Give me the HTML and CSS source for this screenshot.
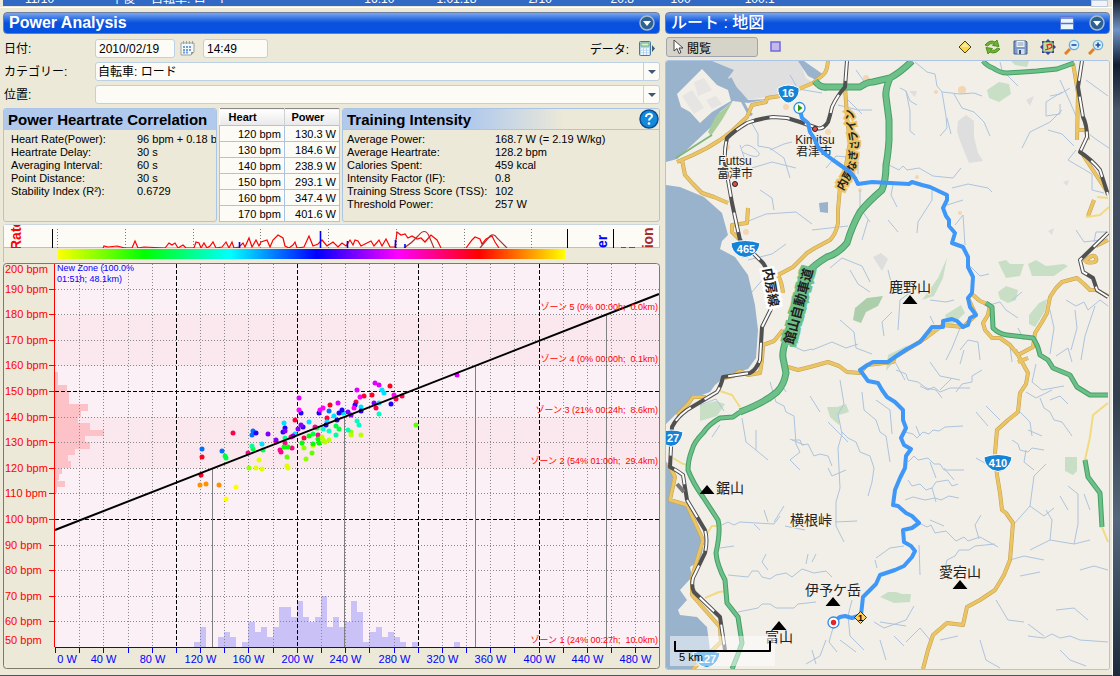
FILE: index.html
```html
<!DOCTYPE html>
<html lang="ja">
<head>
    <meta charset="utf-8">
    <title>Power Analysis</title>
    <meta name="viewport" content="width=device-width, initial-scale=1">
    <link rel="stylesheet" href="styles.css">
</head>
<body>
<div class="window">
    <div class="listrow">
        <div class="cells">
            <span>11/10</span><span>午後</span><span>自転車: ロード</span><span>16:10</span><span>1:01:18</span><span>2/10</span><span>20.8</span><span>100</span><span>100.1</span>
        </div>
        <div class="scroll"></div>
    </div>

    <div class="panes">
        <section class="pane">
            <header class="titlebar">
                <h1>Power Analysis</h1>
                <button class="round" aria-label="menu">
                    <svg width="16" height="16"><circle cx="8" cy="8" r="7" fill="#2e6090" stroke="#a9bccb" stroke-width="1.5"/><path d="M4 6h8l-4 5z" fill="#fff"/></svg>
                </button>
            </header>

            <form class="fields">
                <label for="date">日付:</label>
                <div class="line">
                    <input id="date" class="date" type="text" value="2010/02/19">
                    <button type="button" class="icon" aria-label="calendar">
                        <svg width="15" height="15"><path d="M1 2h13v9l-3 3H1z" fill="#f4f6f7" stroke="#9aa3a6"/><path d="M14 11h-3v3z" fill="#8fa08f"/><path d="M3.500 0v3M6.500 0v3M9.500 0v3M12.500 0v3" stroke="#9aa3a6"/><path d="M3 6h9M3 9h9M3 11.500h6" stroke="#6e9fd8" stroke-width="2" stroke-dasharray="2 1"/></svg>
                    </button>
                    <input class="time" type="text" value="14:49" aria-label="time">
                    <span class="data">データ:</span>
                    <button type="button" class="icon" aria-label="data">
                        <svg width="18" height="15"><rect x="1.500" y=".5" width="11" height="14" rx="1" fill="#b4d3ee" stroke="#4478a8"/><rect x="3" y="2" width="8" height="3" fill="#d9f5c0" stroke="#4c9a4c" stroke-width=".7"/><path d="M3 8h8M3 10.500h8M3 13h8" stroke="#fff" stroke-width="1.600" stroke-dasharray="2 1"/><path d="M14 4l3 3.500-3 3.500z" fill="#3c5878"/></svg>
                    </button>
                </div>
                <label for="category">カテゴリー:</label>
                <div class="combo">
                    <select id="category"><option>自転車: ロード</option></select>
                    <span class="drop"></span>
                </div>
                <label for="place">位置:</label>
                <div class="combo">
                    <select id="place"><option></option></select>
                    <span class="drop"></span>
                </div>
            </form>

            <div class="summary">
                <section class="box">
                    <h2>Power Heartrate Correlation</h2>
                    <dl class="corr">
                        <dt>Heart Rate(Power):</dt><dd>96 bpm + 0.18 b</dd>
                        <dt>Heartrate Delay:</dt><dd>30 s</dd>
                        <dt>Averaging Interval:</dt><dd>60 s</dd>
                        <dt>Point Distance:</dt><dd>30 s</dd>
                        <dt>Stability Index (R²):</dt><dd>0.6729</dd>
                    </dl>
                </section>
                <table class="rates">
                    <thead><tr><th class="heart">Heart</th><th>Power</th></tr></thead>
                    <tbody>
                        <tr><td>120 bpm</td><td>130.3 W</td></tr>
                        <tr><td>130 bpm</td><td>184.6 W</td></tr>
                        <tr><td>140 bpm</td><td>238.9 W</td></tr>
                        <tr><td>150 bpm</td><td>293.1 W</td></tr>
                        <tr><td>160 bpm</td><td>347.4 W</td></tr>
                        <tr><td>170 bpm</td><td>401.6 W</td></tr>
                    </tbody>
                </table>
                <section class="box fade">
                    <h2>Training Intensity
                        <button class="round" aria-label="help">
                            <svg width="20" height="20"><circle cx="10" cy="10" r="9" fill="#1189dc" stroke="#0a4f91" stroke-width="1.500"/><path d="M7 8c0-4 6-4 6-1 0 2-3 2-3 4.500" fill="none" stroke="#fff" stroke-width="2"/><circle cx="10" cy="14.500" r="1.300" fill="#fff"/></svg>
                        </button>
                    </h2>
                    <dl class="intensity">
                        <dt>Average Power:</dt><dd>168.7 W (= 2.19 W/kg)</dd>
                        <dt>Average Heartrate:</dt><dd>128.2 bpm</dd>
                        <dt>Calories Spent:</dt><dd>459 kcal</dd>
                        <dt>Intensity Factor (IF):</dt><dd>0.8</dd>
                        <dt>Training Stress Score (TSS):</dt><dd>102</dd>
                        <dt>Threshold Power:</dt><dd>257 W</dd>
                    </dl>
                </section>
            </div>

            <!-- time line of the ride -->
            <svg class="timeline" viewBox="3 224 657 38">
                <defs>
                    <linearGradient id="rainbow">
                        <stop offset="0" stop-color="#ff0"/><stop offset=".17" stop-color="#0f0"/><stop offset=".34" stop-color="#0ff"/><stop offset=".51" stop-color="#00f"/><stop offset=".67" stop-color="#f0f"/><stop offset=".83" stop-color="#f00"/><stop offset="1" stop-color="#ff0"/>
                    </linearGradient>
                    <clipPath id="strip"><rect x="4" y="225" width="655" height="23"/></clipPath>
                </defs>
                <path d="M3.500 262V227q0-2 2-2H658q1.500 0 1.500 2V248" fill="none" stroke="#a9c4e4"/>
                <rect x="4" y="225" width="655" height="23" fill="#fdfbf6"/>
                <path d="M4 247.500H659" stroke="#a9c4e4"/>
                <path d="M57.500 229V248M125.500 229V248M193.500 229V248M260.500 229V248M328.500 229V248M396.500 229V248M464.500 229V248M531.500 229V248" stroke="#777" stroke-dasharray="1 2"/>
                <g clip-path="url(#strip)" fill="none">
                    <path d="M103 248L104 246 108 247 117 246 125 248 132 248 135 241 138 248 144 247 165 248 169 243 172 245 175 243 178 248 183 245 186 248 194 248 196 242 199 243 201 248 204 243 207 248 210 246 213 242 216 248 222 247 226 242 229 248 232 242 234 248 239 247 243 243 245 247 249 238 252 247 256 240 259 246 261 242 267 240 270 247 273 240 278 235 283 238 285 246 289 248 293 245 295 242 297 248 304 247 309 236 313 246 318 244 322 240 327 246 333 242 338 247 342 243 346 246 350 240 353 245 355 240 358 241 361 246 365 244 371 241 374 246 379 240 382 246 386 239 390 247 395 247 397 232 401 235 405 234 408 238 412 236 417 239 421 238 425 242 431 235 437 240 441 248M466 248L472 240 475 237 480 239 482 244 486 239 492 236 495 242 499 248" stroke="#f00" stroke-width="1.200"/>
                    <path d="M404 248Q412 243 418 236 425 227 429 236L434 248M480 248L490 236Q494 233 497 238L507 248" stroke="#a33" stroke-width="1.200"/>
                    <path d="M239.500 242V248M320.500 231V248M347.500 241V248M395.500 240V248M405 244V248" stroke="#00f" stroke-width="1.600"/>
                    <path d="M52.500 229V248M567.500 229V248M613.500 229V248" stroke="#000"/>
                    <text class="side red" transform="translate(21 250) rotate(-90)">Rate</text>
                    <text class="side blue" transform="translate(607 248) rotate(-90)">er</text>
                    <text class="side brown" transform="translate(653 253) rotate(-90)">tion</text>
                    <path d="M621 247.500h5m3 0h6" stroke="#a33"/>
                </g>
                <rect x="58" y="249" width="507" height="10" fill="url(#rainbow)"/>
            </svg>

            <!-- heart rate over power, filled in by chart.js -->
            <svg id="chart" class="chart" viewBox="3 262 657 408">
                <rect x="55" y="263" width="604" height="384" fill="#faf0f6"/>
                <rect x="55" y="315" width="604" height="51" fill="#fae8ee"/>
                <rect x="55" y="417" width="604" height="51" fill="#fae8ee"/>
                <g id="bars"></g>
                <g id="grid"></g>
                <path d="M212.500 468V647M344.500 417V647M475.500 366V647M606.500 315V647" stroke="#808080"/>
                <g id="dots"></g>
                <path d="M55 530L659 294" stroke="#000" stroke-width="2"/>
                <path d="M54.500 264V647" stroke="#f00"/>
                <path d="M55 647.500H659" stroke="#00f"/>
                <g id="labels"></g>
                <g class="zone">
                    <text x="57" y="271" class="new">New Zone (100.0%</text>
                    <text x="57" y="282" class="new">01:51h; 48.1km)</text>
                    <text x="658" y="310">ゾーン 5 (0% 00:00h;&#160; 0.0km)</text>
                    <text x="658" y="362">ゾーン 4 (0% 00:00h;&#160; 0.1km)</text>
                    <text x="658" y="413">ゾーン 3 (21% 00:24h;&#160; 8.6km)</text>
                    <text x="658" y="464">ゾーン 2 (54% 01:00h;&#160; 29.4km)</text>
                    <text x="658" y="643">ゾーン 1 (24% 00:27h;&#160; 10.0km)</text>
                </g>
                <rect x="3.500" y="263.500" width="656" height="405" rx="3" fill="none" stroke="#7d7a6c"/>
            </svg>
        </section>

        <section class="pane">
            <header class="titlebar">
                <h1 class="jp">ルート : 地図</h1>
                <button class="round" aria-label="layout">
                    <svg width="14" height="14"><rect x=".5" y=".5" width="13" height="13" fill="#e9f6fb" stroke="#5b77d6"/><path d="M1 2h12M1 7.500h12" stroke="#5b6fd0" stroke-width="1.500"/></svg>
                </button>
                <button class="round" aria-label="menu">
                    <svg width="16" height="16"><circle cx="8" cy="8" r="7" fill="#2e6090" stroke="#a9bccb" stroke-width="1.500"/><path d="M4 6h8l-4 5z" fill="#fff"/></svg>
                </button>
            </header>

            <div class="toolbar">
                <button class="browse">
                    <svg width="12" height="16"><path d="M2 1v11l3-2.500 2 5 2-1-2-4.500h4z" fill="#fff" stroke="#444"/></svg>閲覧
                </button>
                <button class="icon grow" aria-label="select area"><svg width="12" height="12"><rect x="1" y="1" width="9" height="9" fill="#c3b9ec" stroke="#7466dc" stroke-width="1.500"/></svg></button>
                <button class="icon" aria-label="waypoint"><svg width="14" height="14"><path d="M7 1l6 6-6 6-6-6z" fill="#fbd94b" stroke="#4a4020"/><path d="M7 3l4 4H3z" fill="#fdeb9c"/></svg></button>
                <button class="icon" aria-label="refresh"><svg width="17" height="16"><path d="M1 6q5-6 10-3l2-2 2 6.500-6.500-1 2-1.500q-4-1.500-7 2zM16 10q-5 6-10 3l-2 2-2-6.500 6.500 1-2 1.500q4 1.500 7-2z" fill="#6cb52d" stroke="#3c7f14" stroke-width=".8"/></svg></button>
                <button class="icon" aria-label="save"><svg width="15" height="15"><path d="M1 1h12l1 1v12H1z" fill="#7f9cc6" stroke="#3d5f92"/><rect x="3.500" y="1" width="8" height="6" fill="#f0f4fa"/><path d="M4.500 3h6M4.500 5h6" stroke="#7d95b5"/><rect x="4.500" y="9" width="7" height="5" fill="#d2dcea"/><rect x="6" y="10" width="2" height="4" fill="#35517c"/></svg></button>
                <button class="icon" aria-label="fit route"><svg width="16" height="16"><rect x="3" y="3" width="10" height="10" fill="#bfe09a" stroke="#5e9c4a"/><path d="M8 0l3 3H5zM8 16l3-3H5zM0 8l3-3v6zM16 8l-3-3v6zM2 2h3L2 5zM14 2v3l-3-3zM2 14v-3l3 3zM14 14h-3l3-3z" fill="#3c3f9c"/><path d="M5 11l3-1-1-4 4-1 1 3-3 2" fill="none" stroke="#e22" stroke-width="1.300"/></svg></button>
                <button class="icon zoom" aria-label="zoom out"><svg width="16" height="16"><path d="M1 15l5-5" stroke="#e0812a" stroke-width="3"/><circle cx="10" cy="6" r="4.700" fill="#d8effc" stroke="#6aaedd" stroke-width="1.300"/><path d="M7.500 6h5" stroke="#1d4f9a" stroke-width="1.600"/></svg></button>
                <button class="icon zoom" aria-label="zoom in"><svg width="16" height="16"><path d="M1 15l5-5" stroke="#e0812a" stroke-width="3"/><circle cx="10" cy="6" r="4.700" fill="#d8effc" stroke="#6aaedd" stroke-width="1.300"/><path d="M7.500 6h5M10 3.500v5" stroke="#1d4f9a" stroke-width="1.600"/></svg></button>
            </div>

            <svg class="map" viewBox="666 61 443 608">
                <defs>
                    <path id="roads" d="M828 61Q827 72 823 75L813 83 794 91 780 96 767 98 766 102 752 105 747 117 732 131 720 140 707 148 693 155 677 162M682 160L685 175 693 184 702 193 714 197 728 203M845 87L847 117 850 143 846 165 840 187 838 210 838 223Q836 234 830 240L815 248 807 253 793 267 778 275 Q782 283 783 293M748 208L747 223 732 225 732 232 740 240M783 330L774 341 763 345 762 360 760 373 748 375 740 371 733 376 723 378M706 397L693 397 688 404 677 415M788 367L798 370 810 367 828 362 839 366 847 372 860 373 867 365 893 362 895 357 910 348 927 337 943 325 963 327 976 315 968 298M973 295L980 301 990 305 988 315 983 323 985 330 992 338 1000 338 1010 345 1018 355 1033 347 1035 333 1042 322 1047 313 1050 297 1056 288 1062 282 1077 278 1084 284 1090 290 1096 290 1108 296M1015 350L1022 362 1028 373 1026 384 1020 393 1018 412 1008 420 997 430 995 453 997 475 1000 493 1002 510 1006 513 1013 523 1010 560 1004 575 995 590 980 600 967 607 963 625 947 623 933 635 928 650 923 669M1018 362l10-4M668 463L675 477 670 500 687 505 703 540 692 577 692 595 720 627 721 642 693 669M1073 63L1078 93 1077 140M1078 130l8 0 2 10M1083 155L1106 190M1084 262q10-10 12-4t-10 4M1108 240l-12 6M1094 200l-6 16"/>
                    <path id="highway" d="M912 61Q901 72 890 78 885 90 886 97L889 120 889 140Q888 155 886 165 886 180 882 190 868 202 860 212 852 226 847 243 838 254 827 257 814 265 808 272 801 284 797 300L786 340Q782 352 783 358L786 373Q784 385 777 392 764 403 740 412M815 81Q820 88 827 87L860 87Q867 82 873 82L890 78"/>
                    <path id="byway" d="M740 412L733 417 720 418Q709 424 703 433 694 442 692 450 688 460 688 470 693 483 703 497L718 520Q721 530 716 553 717 565 725 580L727 603 738 617 742 643Q738 655 732 669M983 61Q987 66 993 68 1000 73 1007 73L1037 71 1057 69 1074 63M986 303L992 307 993 328Q999 334 1007 335L1033 338Q1038 345 1040 355L1048 360 1053 368 1070 375 1077 387 1090 395 1108 395M1085 460L1088 477 1100 493 1102 527"/>
                    <path id="railway" d="M847 61L845 87Q837 96 832 107 830 116 828 122 823 130 817 128L800 122 787 118 773 117Q757 119 747 123 734 131 727 138 724 150 725 163L732 203 740 240 760 260Q766 265 767 273L772 307 762 327 760 360Q756 370 750 373L723 377Q721 386 717 392L687 410Q677 417 672 427L670 467Q678 471 683 475L687 500 705 530Q708 540 705 553L693 578Q691 586 694 592L720 617 725 650M1082 61L1078 87 1083 117Q1087 125 1087 137L1080 152Q1092 160 1100 170L1108 195M1108 233L1080 260 1083 272 1093 278 1097 290 1108 297"/>
                </defs>
                <rect x="666" y="61" width="443" height="608" fill="#f2efe9"/>
                <!-- built up area and sea -->
                <path d="M708 61H800L806 78 812 82 768 97 745 100 737 92z" fill="#e0dfe0"/>
                <path d="M666 61H712L734 70 728 78 742 93 748 100 770 99 748 103 733 101 720 112 711 127 693 144 677 159 666 162z" fill="#99b3cc"/>
                <path d="M798 61h6l20 14-8 5-8-4z" fill="#99b3cc"/>
                <path d="M730 78l18 34 4 3" fill="none" stroke="#99b3cc" stroke-width="3"/>
                <path d="M702 69L717 85 728 90 731 101 712 112 700 123 690 112 681 107 677 94z" fill="#f2efe9"/>
                <path d="M694 82l10-4 8 12-14 6zM682 96l10-6 12 18-10 6zM706 100l10-4 6 8-10 5z" fill="#e6e5e4"/>
                <path d="M733 101L718 117 710 135 678 159 712 142 738 118z" fill="#f2efe9"/>
                <path d="M733 101L716 116 708 132 711 136 722 120z" fill="#a9cd9b"/>
                <path d="M676 158L704 140 712 135" fill="none" stroke="#7fb878" stroke-width="2"/>
                <path d="M666 185L680 187 704 197 722 213 728 235 722 241 720 249 735 257 748 275 755 305 758 330 756 358 748 369 727 375 715 385 710 392 694 398 680 410 666 424z" fill="#99b3cc"/>
                <path d="M666 461L673 477 669 500 687 507 697 527 703 547 701 560 690 567 692 577 680 590 687 600 678 610 680 615 697 617 707 627 710 650 693 669H666z" fill="#99b3cc"/>
                <!-- woods -->
                <g fill="#c8dfc6">
                    <path d="M987 90l12-8 10 2 2 10-12 8-10-4zM1011 61h18l-2 6-12-2zM998 262l8-2 4 4h14l-4 12-14 2zM1028 264l8-4 10 6 18-2 4 2-14 10-22 0zM998 292l8-6 12 4-2 10-8 3-8-4zM1029 315l10-12 8-4-2 12-10 16-6-3zM945 315l16-10 4 8-16 15zM700 405l16-4 9 3-8 12-17 5zM827 407l10 0 9-3 3 8-10 3 0 10-9-8zM1065 457h12v14l-4 4-8-4zM880 597l8-5h8l6 2h9l-1 8-16 1zM908 345l-20 10-2 16z"/>
                    <path d="M922 300l16-22 9-20-4 20-9 18z"/>
                    <path d="M855 308l12-10 16-2-5 10-12 6-5 11-8-3z" fill="#adceaa"/>
                </g>
                <g fill="#dedede"><path d="M958 121l8-6 8 6v16l4 16 5 8-14 2-9-22-3-10zM873 257l8-4 7 6-6 12zM909 91h8l-2 6zM1026 100l8-4-4 10zM1063 182l6-2-2 6zM1048 231l6-3-2 7z"/></g>
                <g fill="#f3d7b5"><circle cx="786" cy="107" r="3"/><circle cx="866" cy="78" r="3"/><circle cx="962" cy="90" r="4"/><circle cx="936" cy="92" r="2"/><circle cx="828" cy="132" r="3"/><circle cx="727" cy="147" r="3"/><circle cx="860" cy="190" r="2"/><circle cx="746" cy="232" r="3"/><circle cx="917" cy="177" r="2"/><circle cx="960" cy="213" r="2"/></g>
                <path d="M819 203l9-1 0 11-8-1z" fill="#99b3cc"/>
                <!-- rivers -->
                <g class="river">
                    <path d="M900 88l6 3 4 10 7 4M906 91l4 20 0 20 5 4M915 62l12 10 8 2 2 12 5 6 4 24 1 12-7 8M942 92l18 2 14-1 8 3M954 94l8 14 12 4 10 10 6 14M947 118l4 16"/>
                    <path d="M1000 62l2 8 16 16M1050 96l10-2 10-6M1062 92l-16 10 0 14 14-2 0-10M1062 110l-12 12-20 10-8 16M1048 130l14 4 12 12M1060 80l10 22 6 14M1086 80l22 16M1089 134l8 6 12 8M1076 150l-8 10 24 14 0 16 12 3"/>
                    <path d="M889 165l10 5 4-4 4 4 12-2 14 8 20 2 8-10M952 188l16-4 20 4 4 4M932 190l0 10-14 22-1 11M893 185l-2 10 6 12M888 220l10 12M947 205l16-5M955 225l8-10 2 30M970 266l10 10 9-2M976 300l10 6 14-4 6 8 12 8M1012 300l10-8M960 328l-8 20-6 12"/>
                    <path d="M750 120l8 14 0 12 12 2 14 10 6 20M740 145l6 18-6 4M742 148q4-6 12 0t4 8-16-4M770 150l14-6 8-2M752 168l20-6 24 6M760 190l12 8 2 12M746 222l20-8 30-2 16 12M790 75l8 14 24 4M848 100l14 14M856 70l10 14M838 105l20 5 14 0M826 168l10-12 22 2 0 16M812 230l36-4M860 190l0 18 10 14M748 260l24-6 14-10M830 268l12-10 20 8 8 16M850 270l8 14 12 8M752 292l12-14M868 220l-6 20"/>
                    <path d="M840 320l14 12 2 16 16 6M812 350l20-8 14 6 12-4M790 345l14 6 8-2M888 270l4 16 14 4M892 312l-10 10 2 14M898 330l2-30 16-12M930 300l16 2 8-2M930 316l4 8"/>
                    <path d="M770 382l6 20 8 4 2 6 8 4 2 28 4 8-10 8 10 10M792 440l8 0 2 5 6-1 6 12 6-2 8 2 4 10M804 445l-14-6M840 380l4 24-6 10 4 20-4 14 2 40-4 14 0 24 8 16M842 432l6 6 8 4 4 10 10 4 4 12-2 14-4 14M862 392l2 18 12 10 4 12 6 4 4 26M848 442l-20-20M846 470l-14 6-4-8M820 412l-10-16M786 392l-6-10M876 400l14 10 2 24M742 418l4 24 22 18M756 430l0 20M720 425l-8 12"/>
                    <path d="M905 432l8 2 4 4 6-6 6 2 4-4 6 1 6-4 18-1M920 436l-4-10M908 462l6-6 4 4 10-2 6 6 6 0 4 6 20 0M944 468l10 12M930 462l6 16M908 480l4 6 8-2 6 6 6-2 4-6 12-2 4 6 6-2M905 500l8-3 12 3 10-2 6 2 8-4 10 2M932 488l4 14M905 380l-10-18M920 386l8 4 6-3 6 5 10-4 20 0M940 390l12-12M896 370l10 4 2 6 10 2 8 6 10 2 6 8M956 392l6-8 10-2 0-6 10-6M930 362l10 14 20 4"/>
                    <path d="M919 523l8 4 4-2 4 8 11-2 10 10 8-4 4 4 12-4 18 10M979 539l-4-14 6-10M945 568l2-8 8-4 4-6 10 0 6-4 20-2M948 580l-2-16M930 520l14 6M1014 524l16-18 4-30 12-12M1030 506l14 10 10-8M1034 470l-10-8 2-12M1012 440l6 4 2 6 8 2 4-4 12 2M1026 392l10 6 16-8M1036 364l-4 18 10 8 22-4M1040 398l4 10 6 4 4 8 8 2 10 14M1020 412l10 10 2 14M1028 430l14 6M1000 420l-14-14M988 426l-12-14M990 466l-14-8"/>
                    <path d="M1010 560l14-4 20 4M1030 550l20-10 24 4 16-4M1050 540l2-20-6-10M1074 544l4-20 0-30-10-8M1068 510l-8-14M1080 570l14-4 14 4M1020 576l20-4M1090 510l-6-16M1056 610l18-2 14 12M1028 636l16 2 8-4 8 4 10-2 10 4 28 2M1044 636l-16-12M980 640l6 20 14 8M1060 650l10 10 16 6M930 640l-10-12-14 14M996 600l12 20 16 2M940 640l18-4"/>
                    <path d="M722 525l6-3 6 3 6-3 34 2 6-8M768 522l-4-12M774 522l10-16M760 530l-6-6M785 526l20 4M835 522l22-1M720 548l14-2M728 575l20 2 4-6 6 0 4 6 8 2 6-4 10-2 6 4 10-8 12 4 12-2 6 6M768 570l-6-8 4-8M806 564l2-10M812 562l4-8M738 612l20-4 4-4 8 0 6 4 18 0 4-4 18-2M826 640l-6 16-14 8M833 628l-4 14 8 10M840 640l16 12M852 600l-4 16 2 20 14 14M874 622l10 6 22-8 8-14M880 622l26 4M920 575l-1-30M876 558l14-10 14-2M875 560l2 8M812 650l4 14M880 640l6 20M894 636l10 10"/>
                    <path d="M1010 346l2 16M960 350l8-10 10 2 2 18M1050 310l4 18-4 26M1066 300l10 6 8-4 4 8 12-10 8 6M1075 310l2 18-6 22M1095 306l-10 30-4 24M1076 230l8 12 16-2M1094 242l2-10 12 0M964 350l-4 14M1056 356l12-8 4 14M1050 400l10-4 8 8M1024 340l-6-12M700 405l16-6 8 12"/>
                </g>
                <!-- roads -->
                <g class="road-edge"><use href="#roads"/></g>
                <g class="road"><use href="#roads"/></g>
                <path class="minor" d="M1108 403L1093 415 1090 437 1085 460M1102 527L1108 542M1086 217l14-2 9-8M1097 197l11 1M720 391l12 4 8 12M673 458l10 6 7 1M706 535l6-9 8 0M705 598l14-6 8-1"/>
                <g class="express-edge"><use href="#highway"/><use href="#byway" class="thin"/></g>
                <g class="express"><use href="#highway"/><use href="#byway" class="thin"/></g>
                <g class="rail"><use href="#railway"/></g>
                <g class="rail sleepers"><use href="#railway"/></g>
                <path d="M677 484l7 8" stroke="#777" stroke-width="4"/>
                <!-- place names -->
                <g class="town" text-anchor="middle">
                    <text x="815" y="144">Kimitsu</text><text x="814" y="156">君津市</text>
                    <text x="735" y="165">Futtsu</text><text x="735" y="178">富津市</text>
                </g>
                <g fill="#e34c4c" stroke="#222"><circle cx="815" cy="129" r="2.500"/><circle cx="735" cy="184" r="2.500"/></g>
                <g class="peak" text-anchor="middle">
                    <text x="910" y="292">鹿野山</text><text x="730" y="493">鋸山</text><text x="811" y="525">横根峠</text>
                    <text x="833" y="595">伊予ケ岳</text><text x="960" y="577">愛宕山</text><text x="779" y="642">富山</text>
                </g>
                <path d="M910 295l7.500 9h-15zM707 485l7.500 9h-15zM833 597l7.500 9h-15zM960 580l7.500 9h-15zM779 621l7.500 9h-15z"/>
                <text class="way rail-name" transform="translate(763 269) rotate(80)">内房線</text>
                <text class="way green-name" transform="translate(793 345) rotate(-75)">館山自動車道</text>
                <text class="way gold-name" transform="translate(843 191) rotate(-60)">内房</text>
                <text class="way gold-name" transform="translate(855 172) rotate(-83)">なぎさ</text>
                <text class="way gold-name" transform="translate(858 141) rotate(-100)">ライン</text>
                <!-- the ride -->
                <path class="route" d="M800 110L802 118 808 123 810 132 814 138 818 147 825 154 833 160 850 172 855 178 858 184 872 182 890 183 909 184 912 182 922 185 930 187 947 195 947 200 943 208 946 216 949 220 949 226 955 233 952 243 963 247 968 257 968 267 973 277 972 293 968 298 970 307 976 315 970 318 968 325 963 327 957 321 952 319 943 321 943 327 932 327 920 342 907 349 895 357 888 362 873 362 866 366 860 370 868 381 878 383 882 390 887 397 895 402 903 410 903 420 906 428 901 438 904 445 911 449 906 456 905 468 900 478 895 490 893 505 898 506 906 513 912 516 919 523 912 528 903 530 904 542 911 546 915 551 912 557 904 566 895 570 880 575 876 584 870 590 863 597 861 615 852 618 845 616 840 617 834 621"/>
                <g stroke="#2e8be6" stroke-width="1.300" fill="#fff"><circle cx="799.500" cy="108" r="5.500"/><circle cx="833.500" cy="622.500" r="5.500"/></g>
                <path d="M798 104.500l4.500 3.500-4.500 3.500z" fill="#2c9a10"/>
                <circle cx="833.500" cy="622.500" r="2.700" fill="#e32727"/>
                <path d="M860.500 611.500l6 6-6 6-6-6z" fill="#fbd05a" stroke="#333"/>
                <text class="mark" x="860.500" y="621" text-anchor="middle">1</text>
                <!-- road numbers -->
                <g class="shield">
                    <path d="M778 88q10-6 21 0 1 8-6 13-5 4-9 0-7-6-6-13z"/>
                    <path d="M731 243q14-5 29 0-1 9-9 13-6 3-12 0-8-5-8-13z"/>
                    <path d="M984 457q14-5 28 0-1 8-8 13-6 3-12 0-8-5-8-13z"/>
                    <path d="M660 432q11-4 23 0-1 8-7 13-5 3-10 0-6-5-6-13z"/>
                    <path d="M693 653q13-5 27 0-1 8-8 13-5 3-11 0-7-5-8-13z"/>
                    <text x="788" y="97">16</text><text x="746" y="253">465</text><text x="998" y="467">410</text><text x="673" y="442">27</text><text x="707" y="663">127</text>
                </g>
                <rect x="670" y="636" width="105" height="30" fill="#fff" opacity=".5"/>
                <path d="M675 641v10h95v-10" fill="none" stroke="#000" stroke-width="2"/>
                <text class="scale" x="679" y="661">5 km</text>
            </svg>
        </section>
    </div>
</div>
<script src="chart.js"></script>
</body>
</html>
```
FILE: styles.css
```css
* {
    box-sizing: border-box;
}
body {
    margin: 0;
    min-height: 100vh;
    padding-right: 7px;
    font-family: "Liberation Sans", "Noto Sans CJK JP", sans-serif;
    font-size: 12px;
    color: #000;
    background: linear-gradient(#16202c, #6f93c4 30px, #101c30 65px, #48566a 110px, #333f4e 400px, #55677c 520px, #1d2a3c);
}
.window {
    min-height: 100vh;
    background-color: #ece9d8;
    border-right: 1px solid #fff;
    border-bottom: 1px solid #4a5560;
}
.listrow {
    display: flex;
    height: 8px;
    padding: 0 4px 0 3px;
    border-bottom: 1px solid #fff;
}
.cells {
    flex: 1;
    display: grid;
    grid-template-columns: 86fr 40fr 213fr 72fr 92fr 82fr 60fr 74fr 346fr;
    align-content: end;
    overflow: hidden;
    padding-left: 22px;
    height: 6px;
    line-height: 14px;
    white-space: nowrap;
    color: #fff;
    background-color: #316ac5;
}
.scroll {
    width: 17px;
    background-color: #f3f3f5;
    border: 1px solid #b9cbe2;
}
.panes {
    display: grid;
    grid-template-columns: minmax(0, 657fr) minmax(0, 445fr);
    gap: 5px;
    padding: 4px 2px 0 3px;
}
h1, h2, dl, dd {
    margin: 0;
}
button {
    display: inline-flex;
    align-items: center;
    justify-content: center;
    padding: 0;
    border: 0;
    background: none;
    font: inherit;
}
svg {
    display: block;
}
.titlebar {
    display: flex;
    align-items: center;
    gap: 15px;
    height: 22px;
    padding: 0 4px 0 5px;
    border: 1px solid #6d7f9c;
    border-radius: 4px;
    background: linear-gradient(#7ba6ee, #2e70e4 30%, #0a50dc 50%, #0453e2);
}
.titlebar h1 {
    flex: 1;
    font-size: 16px;
    line-height: 20px;
    color: #fff;
}
.titlebar .jp {
    font-weight: 500;
}

/* form */
.fields {
    display: grid;
    grid-template-columns: 92px 1fr;
    row-gap: 4px;
    padding-top: 5px;
    align-items: center;
}
.fields label {
    padding-left: 1px;
    line-height: 18px;
}
.fields input,
.combo {
    height: 19px;
    border: 1px solid #bcd0e6;
    border-radius: 3px;
    background-color: #fdfbf6;
}
.fields input {
    padding: 0 3px;
    font: inherit;
}
.line {
    display: flex;
    align-items: center;
}
.date {
    width: 80px;
    margin-right: 5px;
}
.time {
    width: 65px;
    margin-left: 8px;
}
.data {
    flex: 1;
    text-align: right;
    padding-right: 9px;
}
.line .icon:last-child {
    margin-right: 4px;
}
.combo {
    display: flex;
}
.combo select {
    flex: 1;
    padding: 0 2px;
    border: 0;
    appearance: none;
    background: none;
    font: inherit;
    color: #000;
}
.drop {
    display: flex;
    align-items: center;
    justify-content: center;
    width: 16px;
    border-left: 1px solid #bcd0e6;
}
.drop::after {
    content: "";
    border: 4px solid transparent;
    border-top-color: #3c5878;
    border-bottom: 0;
}

/* figures */
.summary {
    display: grid;
    grid-template-columns: 214fr 121fr 318fr;
    gap: 2px;
    margin: 4px 0 2px;
}
.box {
    min-width: 0;
    height: 114px;
    overflow: hidden;
    border: 1px solid #a9c4e4;
    border-radius: 3px;
}
.box h2 {
    display: flex;
    justify-content: space-between;
    align-items: center;
    height: 21px;
    padding: 0 0 0 4px;
    font-size: 15px;
    white-space: nowrap;
    background-color: #b0c9ed;
}
.fade h2 {
    background: linear-gradient(90deg, #b0c9ed 40%, #ece9d8 70%);
    border-bottom: 1px solid #a9c4e4;
}
.box dl {
    display: grid;
    padding: 3px 0 0 7px;
    font-size: 11px;
    line-height: 13px;
    white-space: nowrap;
}
.box .corr {
    grid-template-columns: 126px 1fr;
}
.box .intensity {
    grid-template-columns: 148px 1fr;
    padding-left: 4px;
}
.rates {
    width: 100%;
    height: 114px;
    border-collapse: collapse;
    table-layout: fixed;
    background-color: #fdfbf6;
    font-size: 11px;
    border-top: 1px solid #888;
}
.rates th {
    height: 17px;
    padding: 0 8px 0 0;
    background: linear-gradient(#fff, #e8e8ea);
    border-right: 1px solid #d0d0d0;
}
.rates .heart {
    width: 54%;
    padding-right: 18px;
}
.rates td {
    height: 16px;
    padding: 0 3px 0 0;
    text-align: right;
    line-height: 14px;
    border: 1px solid #a9c4e4;
}

/* charts */
.timeline,
.chart {
    width: 100%;
}
.side {
    font-size: 14px;
    font-weight: bold;
}
.red {
    fill: #f00;
}
.blue {
    fill: #00f;
}
.brown {
    fill: #a52a2a;
}
.axis {
    font-size: 11px;
}
.zone text {
    font-size: 9px;
    fill: #f00;
    text-anchor: end;
}
.zone .new {
    fill: #00f;
    text-anchor: start;
}

/* map */
.toolbar {
    display: flex;
    align-items: center;
    gap: 12px;
    height: 26px;
    padding: 0 6px 0 1px;
}
.browse {
    justify-content: flex-start;
    gap: 3px;
    width: 92px;
    height: 20px;
    padding-left: 5px;
    border: 1px solid #a3a3b0;
    border-radius: 3px;
    background-color: #d6d3c8;
}
.grow {
    margin-right: auto;
}
.icon.zoom {
    margin-left: -4px;
}
.map {
    width: 100%;
    border: 1px solid #a9c4e4;
    border-radius: 3px;
}
.map path {
    stroke-linejoin: round;
}
.river,
.road,
.road-edge,
.express,
.express-edge,
.rail,
.minor,
.route {
    fill: none;
}
.river {
    stroke: #adc4dc;
}
.road-edge {
    stroke: #c4a050;
    stroke-width: 4;
}
.road {
    stroke: #ebc464;
    stroke-width: 3;
}
.minor {
    stroke: #f2da80;
    stroke-width: 2;
}
.express-edge {
    stroke: #46a068;
    stroke-width: 7;
}
.express {
    stroke: #6cc088;
    stroke-width: 5;
}
.express-edge .thin {
    stroke-width: 5;
}
.express .thin {
    stroke-width: 3;
}
.rail {
    stroke: #505050;
    stroke-width: 4;
}
.sleepers {
    stroke: #fff;
    stroke-width: 2;
    stroke-dasharray: 20 16;
}
.route {
    stroke: #3f97f8;
    stroke-width: 4;
}
.town,
.peak,
.way {
    stroke: #f2efe9;
    stroke-width: 2px;
    paint-order: stroke;
    fill: #222;
}
.town {
    font-size: 12px;
}
.peak {
    font-size: 14px;
}
.way {
    font-size: 13px;
    font-weight: bold;
}
.rail-name {
    stroke: #fff;
    stroke-width: 5px;
}
.green-name {
    stroke: #6cc088;
    stroke-width: 5px;
}
.gold-name {
    font-size: 11px;
    stroke: #ebc464;
    stroke-width: 4px;
}
.shield path {
    fill: #1684d6;
    stroke: #fff;
    stroke-width: 1px;
}
.shield text {
    font-size: 11px;
    font-weight: bold;
    fill: #fff;
    text-anchor: middle;
}
.mark {
    font-size: 9px;
    font-weight: bold;
}
.scale {
    font-size: 11px;
}
```
FILE: chart.js
```js
var NS = "http://www.w3.org/2000/svg";

function add(parent, name, attrs, text) {
    var el = document.createElementNS(NS, name);
    for (var key in attrs) {
        el.setAttribute(key, attrs[key]);
    }
    if (text) {
        el.textContent = text;
    }
    document.getElementById(parent).appendChild(el);
}

function px(watt) {
    return Math.round(55 + watt * 1.209) + 0.5;
}
function py(bpm) {
    return Math.round(647 - (bpm - 50) * 2.56) + 0.5;
}

// power grid
for (var w = 0; w <= 480; w += 20) {
    var x = px(w);
    var major = w % 100 == 0;
    if (w > 0) {
        add("grid", "path", {d: "M" + x + " 264V647", stroke: major ? "#000" : "#888", "stroke-dasharray": major ? "4 2" : "1 2"});
    }
    add("grid", "path", {d: "M" + x + " 648v5", stroke: "#00f"});
    if (w % 40 == 0) {
        add("labels", "text", {x: w == 0 ? 67 : x, y: 663, "class": "axis blue", "text-anchor": "middle"}, w + " W");
    }
}

// heart rate grid
for (var b = 50; b <= 200; b += 10) {
    var y = py(b);
    var major = b % 50 == 0;
    var ty = y + 3;
    if (b == 200) ty = 273;
    if (b == 50) ty = 644;
    if (b > 50 && b < 200) {
        add("grid", "path", {d: "M55 " + y + "H659", stroke: major ? "#000" : "#888", "stroke-dasharray": major ? "4 2" : "1 2"});
        add("grid", "path", {d: "M49 " + y + "h5", stroke: "#f00"});
    }
    add("labels", "text", {x: 5, y: ty, "class": "axis red"}, b + " bpm");
}

// time spent per power, 5 W a bar
var power = [5,20,0,0,10,15,10,0,5,25,15,20,10,20,40,40,30,46,30,25,30,51,20,30,20,25,46,35,5,15,20,10,15,10,5,0,5,0,0,0,0,0,0,5];
for (var i = 0; i < power.length; i++) {
    var left = Math.round(194 + i * 6.05);
    var right = Math.round(194 + (i + 1) * 6.05);
    add("bars", "rect", {x: left, y: 647 - power[i], width: right - left, height: power[i], fill: "#cac2f6"});
}

// time spent per heart rate: top, width
var heart = [[372,3],[385,12],[391,14],[404,33],[411,26],[417,23],[423,35],[430,49],[436,30],[442,35],[449,20],[455,13],[461,16],[468,7],[474,4],[480,3],[481,10],[487,2],[493,0]];
for (var i = 0; i < heart.length - 1; i++) {
    add("bars", "rect", {x: 55, y: heart[i][0], width: heart[i][1], height: heart[i + 1][0] - heart[i][0], fill: "#fdc2c8"});
}

var dots = {
    "#0070ff": [[202,449],[222,451],[253,431],[252,435],[329,411]],
    "#ff0020": [[202,457],[201,475],[330,405],[364,396],[372,395],[390,386]],
    "#ff9000": [[200,485],[206,484],[219,485]],
    "#ffff00": [[236,487],[226,499]],
    "#ff0044": [[233,433],[295,420],[304,438],[327,418],[356,402],[376,408],[396,399],[402,396]],
    "#00ff44": [[225,456],[226,458],[253,449],[263,450],[313,434],[317,428],[336,426],[339,429]],
    "#00ff99": [[252,446],[285,438],[336,435]],
    "#ff0090": [[248,453],[276,442],[280,450],[281,452],[285,443],[292,448],[291,437],[315,427],[318,435]],
    "#00e0ff": [[262,444],[284,423],[295,434],[309,422],[327,422],[334,416],[343,413],[361,407],[379,403],[382,390],[384,393]],
    "#e0ff00": [[259,460],[256,468],[262,469],[287,466],[288,468],[313,446]],
    "#90ff00": [[249,468],[304,448],[306,459],[351,432]],
    "#2000ff": [[256,433],[285,428],[283,432],[301,413],[303,427],[319,413],[326,425],[339,413],[342,410],[337,420],[355,405],[361,411],[391,404]],
    "#8000ff": [[268,434],[276,440],[285,431],[293,436],[298,429],[301,425],[348,412],[351,415],[374,403]],
    "#00ff00": [[284,447],[288,447],[302,443],[309,436],[313,444],[318,439],[319,443]],
    "#60ff00": [[287,457],[312,453],[416,425]],
    "#dd00ff": [[299,398],[338,403],[357,390],[375,383],[379,385],[457,375]],
    "#ff00ff": [[299,410],[320,410],[323,408],[354,408],[360,397],[394,395]],
    "#b8ff00": [[322,437],[323,440],[325,442],[329,440],[351,435],[361,435]],
    "#00ffc0": [[323,429],[329,431],[348,430],[357,421],[359,425],[379,414]]
};
for (var color in dots) {
    dots[color].forEach(function (p) {
        add("dots", "circle", {cx: p[0], cy: p[1], r: 2.5, fill: color});
    });
}
```
